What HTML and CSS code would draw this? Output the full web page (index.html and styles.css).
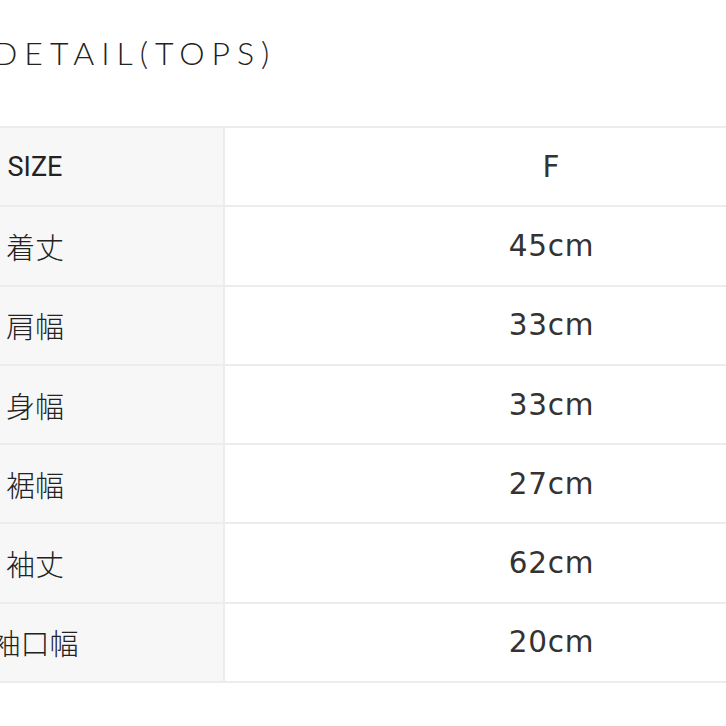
FILE: index.html
```html
<!DOCTYPE html>
<html lang="ja">
<head>
<meta charset="utf-8">
<link rel="stylesheet" href="styles.css">
</head>
<body>
<div class="page">
  <h1 class="title">DETAIL(TOPS)</h1>
  <div class="table">
    <div class="row"><div class="label latin">SIZE</div><div class="value">F</div></div>
    <div class="row"><div class="label">着丈</div><div class="value">45cm</div></div>
    <div class="row"><div class="label">肩幅</div><div class="value">33cm</div></div>
    <div class="row"><div class="label">身幅</div><div class="value">33cm</div></div>
    <div class="row"><div class="label">裾幅</div><div class="value">27cm</div></div>
    <div class="row"><div class="label">袖丈</div><div class="value">62cm</div></div>
    <div class="row"><div class="label">袖口幅</div><div class="value">20cm</div></div>
  </div>
</div>
</body>
</html>
```
FILE: styles.css
```css
html, body {
  margin: 0;
  padding: 0;
  background: #fff;
  overflow: hidden;
}
.page {
  width: 726px;
  height: 726px;
  overflow: hidden;
  color: #222;
}
.title {
  margin: 0 0 0 -7px;
  padding-top: 33px;
  height: 126px;
  box-sizing: border-box;
  font-family: "Lato", "Open Sans", sans-serif;
  font-weight: 300;
  font-size: 32px;
  line-height: 40px;
  letter-spacing: 7px;
  color: #222;
  white-space: nowrap;
}
.table {
  margin-left: -153px;
  width: 1030px;
  border-top: 2px solid #ececec;
}
.row {
  display: grid;
  grid-template-columns: 378px 652px;
  height: 79.3px;
  box-sizing: border-box;
  border-bottom: 2px solid #ececec;
}
.label {
  background: #f7f7f7;
  border-right: 2px solid #ececec;
  display: flex;
  align-items: center;
  justify-content: center;
  font-family: "Noto Sans CJK JP", sans-serif;
  font-weight: 300;
  font-size: 29px;
  color: #222;
}
.label.latin {
  font-family: "Roboto", sans-serif;
  font-weight: 400;
  font-size: 27px;
}
.value {
  display: flex;
  align-items: center;
  justify-content: center;
  padding-left: 1px;
  font-family: "DejaVu Sans", sans-serif;
  font-weight: 400;
  font-size: 29.5px;
  letter-spacing: 0.8px;
  color: #333;
}
```
